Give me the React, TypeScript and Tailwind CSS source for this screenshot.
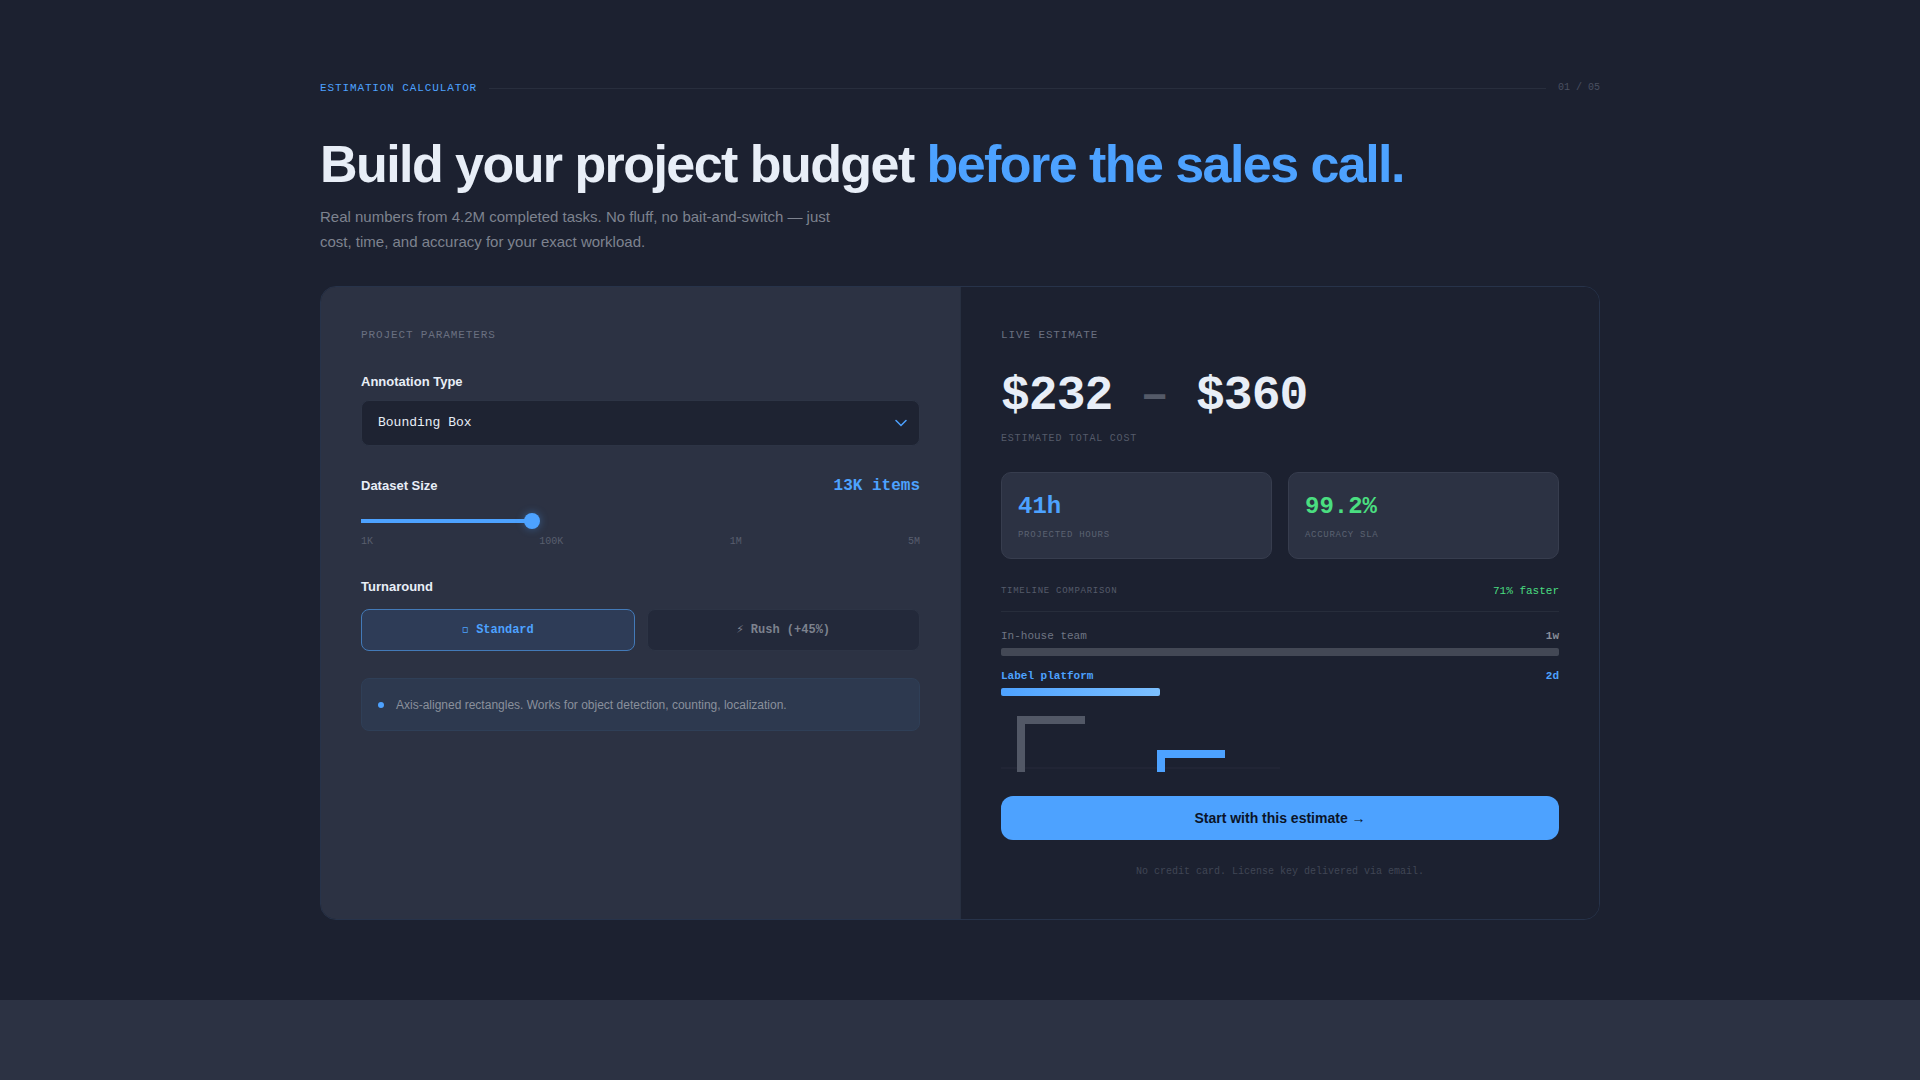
import React, { useState } from 'react';

interface AnnotationType {
  id: string;
  label: string;
  note: string;
  low: number;
  high: number;
  perHour: number;
  accuracy: string;
}

const annotationTypes: AnnotationType[] = [
  {
    id: 'bbox',
    label: 'Bounding Box',
    note: 'Axis-aligned rectangles. Works for object detection, counting, localization.',
    low: 0.018,
    high: 0.028,
    perHour: 314,
    accuracy: '99.2%',
  },
  {
    id: 'polygon',
    label: 'Polygon',
    note: 'Tight outlines around irregular shapes.',
    low: 0.045,
    high: 0.07,
    perHour: 140,
    accuracy: '98.7%',
  },
];

// slider runs 0-100 on a log scale from 1K to 5M
const toItems = (position: number) => 1000 * Math.pow(5000, position / 100);

const formatItems = (items: number) =>
  items >= 1000000 ? `${(items / 1000000).toFixed(1)}M` : `${Math.round(items / 1000)}K`;

const formatMoney = (value: number) => `$${Math.round(value).toLocaleString('en-US')}`;

const StatCard: React.FC<{ value: string; label: string; color: string }> = ({ value, label, color }) => (
  <div className="rounded-[10px] border border-[#373d4e] bg-[#2c3243] px-4 pt-[17px] pb-[15px]">
    <div className={`text-2xl leading-[34px] font-bold ${color}`}>{value}</div>
    <div className="mt-1 text-[9px] leading-[15px] tracking-[0.08em] text-[#5b6272] uppercase">{label}</div>
  </div>
);

const App: React.FC = () => {
  const [typeId, setTypeId] = useState('bbox');
  const [position, setPosition] = useState(30);
  const [rush, setRush] = useState(false);

  const type = annotationTypes.find((item) => item.id === typeId) ?? annotationTypes[0];
  const items = toItems(position);
  const rate = rush ? 1.45 : 1;

  const turnaroundBase = 'h-[42px] rounded-lg border text-xs font-bold transition-colors';
  const turnaroundOn = 'border-[#437ab8] bg-[#2e3c57] text-[#4da2ff]';
  const turnaroundOff = 'border-[#2d3445] bg-[#23293a] text-[#7d828e]';

  return (
    <div className="flex min-h-screen flex-col bg-[#1c2130] font-['Liberation_Sans',Arial,sans-serif] text-[#e8eef7]">
      <section className="px-6 py-20">
        <div className="mx-auto max-w-[1280px]">
          <div className="flex items-center gap-3 font-['Liberation_Mono',monospace] leading-4">
            <span className="text-[11px] tracking-[0.08em] text-[#4da2ff] uppercase">Estimation Calculator</span>
            <span className="h-px flex-1 bg-[#282e3d]" />
            <span className="text-[10px] text-[#4a5060]">01 / 05</span>
          </div>

          <h1 className="mt-10 text-[52px] leading-14 font-bold tracking-[-0.03em]">
            Build your project budget <span className="text-[#4da2ff]">before the sales call.</span>
          </h1>
          <p className="mt-3 max-w-[520px] text-[15px] leading-[25px] text-[#7e838f]">
            Real numbers from 4.2M completed tasks. No fluff, no bait-and-switch — just cost, time, and accuracy for
            your exact workload.
          </p>

          <div className="mt-8 grid grid-cols-1 overflow-hidden rounded-2xl border border-[#27334a] lg:grid-cols-2">
            {/* Parameters */}
            <div className="bg-[#2c3243] p-10">
              <h2 className="font-['Liberation_Mono',monospace] text-[11px] leading-[17px] tracking-[0.08em] text-[#6a7080] uppercase">
                Project Parameters
              </h2>

              <label htmlFor="annotation-type" className="mt-7 block text-[13px] leading-5 font-bold">
                Annotation Type
              </label>
              <div className="relative mt-2">
                <select
                  id="annotation-type"
                  value={typeId}
                  onChange={(e) => setTypeId(e.target.value)}
                  className="h-[46px] w-full appearance-none rounded-lg border border-[#2d3445] bg-[#1e2332] px-4 font-['Liberation_Mono',monospace] text-[13px] outline-none"
                >
                  {annotationTypes.map((item) => (
                    <option key={item.id} value={item.id}>
                      {item.label}
                    </option>
                  ))}
                </select>
                <svg
                  className="pointer-events-none absolute inset-y-0 right-[13px] my-auto h-2 w-3 text-[#4da2ff]"
                  viewBox="0 0 12 8"
                  fill="none"
                  stroke="currentColor"
                  strokeWidth="1.5"
                  strokeLinecap="round"
                  aria-hidden="true"
                >
                  <path d="M1 1.5l5 5 5-5" />
                </svg>
              </div>

              <div className="mt-7 flex items-center justify-between leading-6">
                <label htmlFor="dataset-size" className="text-[13px] font-bold">
                  Dataset Size
                </label>
                <output
                  htmlFor="dataset-size"
                  className="font-['Liberation_Mono',monospace] text-base leading-6 font-bold text-[#4da2ff]"
                >
                  {formatItems(items)} items
                </output>
              </div>
              <input
                id="dataset-size"
                type="range"
                min={0}
                max={100}
                value={position}
                onChange={(e) => setPosition(Number(e.target.value))}
                style={{ backgroundSize: `${position}% 4px` }}
                className="mt-[15px] block h-4 w-full cursor-pointer appearance-none rounded-sm bg-linear-to-r from-[#4da2ff] to-[#4da2ff] bg-left bg-no-repeat outline-none [&::-webkit-slider-thumb]:size-4 [&::-webkit-slider-thumb]:appearance-none [&::-webkit-slider-thumb]:rounded-full [&::-webkit-slider-thumb]:bg-[#4da2ff] [&::-webkit-slider-thumb]:shadow-[0_0_8px_rgba(77,162,255,0.4)]"
              />
              <div className="mt-1 flex justify-between font-['Liberation_Mono',monospace] text-[10px] leading-[18px] text-[#585e6e]">
                <span>1K</span>
                <span>100K</span>
                <span>1M</span>
                <span>5M</span>
              </div>

              <h3 className="mt-6.5 text-[13px] leading-5 font-bold">Turnaround</h3>
              <div className="mt-3 grid grid-cols-2 gap-3 font-['Liberation_Mono','DejaVu_Sans_Mono',monospace]">
                <button
                  type="button"
                  aria-pressed={!rush}
                  onClick={() => setRush(false)}
                  className={`${turnaroundBase} ${rush ? turnaroundOff : turnaroundOn}`}
                >
                  ◽ Standard
                </button>
                <button
                  type="button"
                  aria-pressed={rush}
                  onClick={() => setRush(true)}
                  className={`${turnaroundBase} ${rush ? turnaroundOn : turnaroundOff}`}
                >
                  ⚡ Rush (+45%)
                </button>
              </div>

              <div className="mt-[27px] flex items-center gap-3 rounded-lg border border-[#2f3f57] bg-[#2d394f] px-4 pt-4 pb-[15px]">
                <span className="size-1.5 rounded-full bg-[#4da2ff]" />
                <p className="text-xs leading-5 text-[#8a909c]">{type.note}</p>
              </div>
            </div>

            {/* Estimate */}
            <div className="border-[#272f40] bg-[#1c2130] p-10 font-['Liberation_Mono',monospace] lg:border-l">
              <h2 className="text-[11px] leading-[17px] tracking-[0.08em] text-[#6a7080] uppercase">Live Estimate</h2>

              <div className="mt-7 text-5xl leading-none font-bold tracking-[-0.02em]">
                {formatMoney(items * type.low * rate)} <span className="text-[#545a68]">–</span>{' '}
                {formatMoney(items * type.high * rate)}
              </div>
              <div className="mt-2 text-[10px] leading-[22px] tracking-[0.08em] text-[#555b6a] uppercase">
                Estimated total cost
              </div>

              <div className="mt-5.5 grid grid-cols-2 gap-4">
                <StatCard value={`${Math.round(items / type.perHour)}h`} label="Projected hours" color="text-[#4da2ff]" />
                <StatCard value={type.accuracy} label="Accuracy SLA" color="text-[#4ade80]" />
              </div>

              <div className="mt-6 flex items-center justify-between border-b border-[#272d3b] pb-3 leading-4">
                <span className="text-[9px] tracking-[0.08em] text-[#555b6a] uppercase">Timeline comparison</span>
                <span className="text-[11px] text-[#4ade80]">71% faster</span>
              </div>

              <div className="mt-4 flex justify-between text-[11px] leading-4">
                <span className="text-[#6f7583]">In-house team</span>
                <span className="font-bold text-[#8a8f9b]">1w</span>
              </div>
              <div className="mt-1 h-2 rounded-xs bg-[#434855]" />
              <div className="mt-3 flex justify-between text-[11px] leading-4 font-bold text-[#4da2ff]">
                <span>Label platform</span>
                <span>2d</span>
              </div>
              <div className="mt-1 h-2 w-2/7 rounded-xs bg-linear-to-r from-[#4da2ff] to-[#7cc0ff]" />

              <svg className="mt-4 block" width="280" height="60" viewBox="0 0 280 60" aria-hidden="true">
                <path d="M0 56H279" stroke="#262b3a" />
                <path d="M16 60V4H84V12H24V60Z" fill="#525866" />
                <path d="M156 60V38H224V46H164V60Z" fill="#4da2ff" />
              </svg>

              <button
                type="button"
                className="mt-6 h-11 w-full rounded-xl bg-[#4da2ff] font-['Liberation_Sans',Arial,sans-serif] text-sm font-bold text-[#0b1428]"
              >
                Start with this estimate →
              </button>
              <p className="mt-6 text-center text-[10px] leading-[15px] text-[#404655]">
                No credit card. License key delivered via email.
              </p>
            </div>
          </div>
        </div>
      </section>

      <div className="min-h-20 flex-1 bg-[#2c3243]" />
    </div>
  );
};

export default App;
